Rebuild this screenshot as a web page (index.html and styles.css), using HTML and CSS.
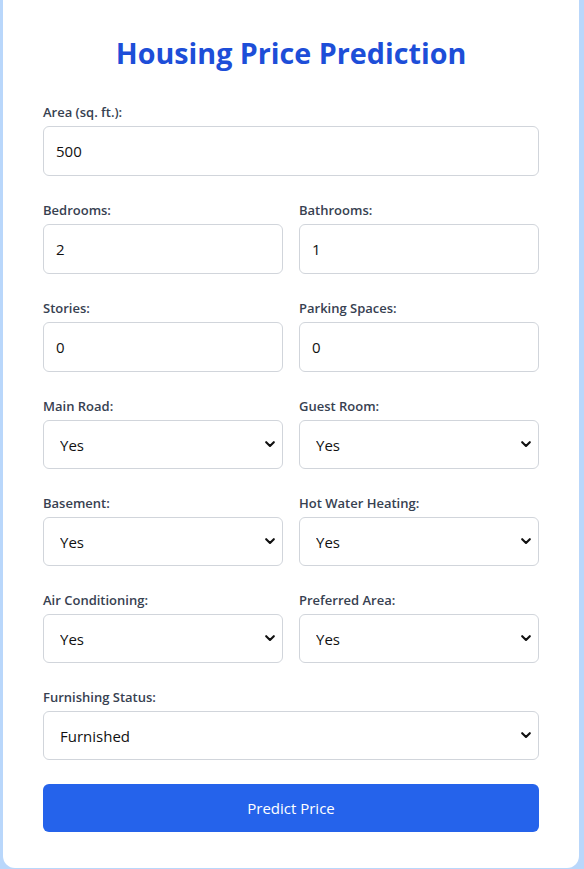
FILE: index.html
```html
<!DOCTYPE html>
<html lang="en">
<head>
<meta charset="utf-8">
<title>Housing Price Prediction</title>
<link rel="stylesheet" href="styles.css">
</head>
<body>
<div class="card">
  <h1 class="title">Housing Price Prediction</h1>
  <form class="form">
    <div class="group">
      <label class="label">Area (sq. ft.):</label>
      <input class="field num" type="number" value="500">
    </div>
    <div class="row">
      <div class="group">
        <label class="label">Bedrooms:</label>
        <input class="field num" type="number" value="2">
      </div>
      <div class="group">
        <label class="label">Bathrooms:</label>
        <input class="field num" type="number" value="1">
      </div>
    </div>
    <div class="row">
      <div class="group">
        <label class="label">Stories:</label>
        <input class="field num" type="number" value="0">
      </div>
      <div class="group">
        <label class="label">Parking Spaces:</label>
        <input class="field num" type="number" value="0">
      </div>
    </div>
    <div class="row">
      <div class="group">
        <label class="label">Main Road:</label>
        <div class="select-wrap">
          <select class="field select"><option>Yes</option><option>No</option></select>
          <svg class="chev" viewBox="0 0 10 7" width="10" height="7"><path d="M1.2 1.2 L5 5 L8.8 1.2" fill="none" stroke="#111" stroke-width="2.1" stroke-linecap="round" stroke-linejoin="round"/></svg>
        </div>
      </div>
      <div class="group">
        <label class="label">Guest Room:</label>
        <div class="select-wrap">
          <select class="field select"><option>Yes</option><option>No</option></select>
          <svg class="chev" viewBox="0 0 10 7" width="10" height="7"><path d="M1.2 1.2 L5 5 L8.8 1.2" fill="none" stroke="#111" stroke-width="2.1" stroke-linecap="round" stroke-linejoin="round"/></svg>
        </div>
      </div>
    </div>
    <div class="row">
      <div class="group">
        <label class="label">Basement:</label>
        <div class="select-wrap">
          <select class="field select"><option>Yes</option><option>No</option></select>
          <svg class="chev" viewBox="0 0 10 7" width="10" height="7"><path d="M1.2 1.2 L5 5 L8.8 1.2" fill="none" stroke="#111" stroke-width="2.1" stroke-linecap="round" stroke-linejoin="round"/></svg>
        </div>
      </div>
      <div class="group">
        <label class="label">Hot Water Heating:</label>
        <div class="select-wrap">
          <select class="field select"><option>Yes</option><option>No</option></select>
          <svg class="chev" viewBox="0 0 10 7" width="10" height="7"><path d="M1.2 1.2 L5 5 L8.8 1.2" fill="none" stroke="#111" stroke-width="2.1" stroke-linecap="round" stroke-linejoin="round"/></svg>
        </div>
      </div>
    </div>
    <div class="row">
      <div class="group">
        <label class="label">Air Conditioning:</label>
        <div class="select-wrap">
          <select class="field select"><option>Yes</option><option>No</option></select>
          <svg class="chev" viewBox="0 0 10 7" width="10" height="7"><path d="M1.2 1.2 L5 5 L8.8 1.2" fill="none" stroke="#111" stroke-width="2.1" stroke-linecap="round" stroke-linejoin="round"/></svg>
        </div>
      </div>
      <div class="group">
        <label class="label">Preferred Area:</label>
        <div class="select-wrap">
          <select class="field select"><option>Yes</option><option>No</option></select>
          <svg class="chev" viewBox="0 0 10 7" width="10" height="7"><path d="M1.2 1.2 L5 5 L8.8 1.2" fill="none" stroke="#111" stroke-width="2.1" stroke-linecap="round" stroke-linejoin="round"/></svg>
        </div>
      </div>
    </div>
    <div class="group">
      <label class="label">Furnishing Status:</label>
      <div class="select-wrap">
        <select class="field select"><option>Furnished</option><option>Semi-furnished</option><option>Unfurnished</option></select>
        <svg class="chev" viewBox="0 0 10 7" width="10" height="7"><path d="M1.2 1.2 L5 5 L8.8 1.2" fill="none" stroke="#111" stroke-width="2.1" stroke-linecap="round" stroke-linejoin="round"/></svg>
      </div>
    </div>
    <button class="btn" type="button">Predict Price</button>
  </form>
</div>
</body>
</html>
```

FILE: styles.css
```css
* { box-sizing: border-box; }

html, body {
  margin: 0;
  padding: 0;
  background: #b9d7fb;
}

body {
  padding: 0 5px 1px 3px;
  font-family: "Open Sans", "Noto Sans", sans-serif;
}

.card {
  background: #ffffff;
  border-radius: 0 0 12px 12px;
  padding: 35px 40px 36px 40px;
}

.title {
  margin: 0 0 31px 0;
  text-align: center;
  font-size: 28.7px;
  line-height: 36px;
  font-weight: 700;
  color: #1d4ed8;
}

.form {
  display: flex;
  flex-direction: column;
  gap: 24px;
}

.row {
  display: grid;
  grid-template-columns: 1fr 1fr;
  gap: 16px;
}

.group {
  display: flex;
  flex-direction: column;
  gap: 4px;
}

.label {
  font-size: 13px;
  line-height: 20px;
  font-weight: 600;
  color: #374151;
}

.field {
  width: 100%;
  height: 50px;
  padding: 0 16px;
  border: 1px solid #d1d5db;
  border-radius: 6px;
  background: #ffffff;
  font-family: inherit;
  font-size: 15px;
  color: #111111;
  outline: none;
}

.num {
  padding-left: 12px;
}

.field[type="number"]::-webkit-inner-spin-button,
.field[type="number"]::-webkit-outer-spin-button {
  -webkit-appearance: none;
  margin: 0;
}

.select-wrap {
  position: relative;
}

.select {
  height: 49px;
  -webkit-appearance: none;
  appearance: none;
  padding-right: 32px;
}

.chev {
  position: absolute;
  right: 8px;
  top: 21px;
  pointer-events: none;
}

.btn {
  height: 48px;
  border: none;
  border-radius: 6px;
  background: #2563eb;
  color: #ffffff;
  font-family: inherit;
  font-size: 15px;
  cursor: pointer;
}
```
